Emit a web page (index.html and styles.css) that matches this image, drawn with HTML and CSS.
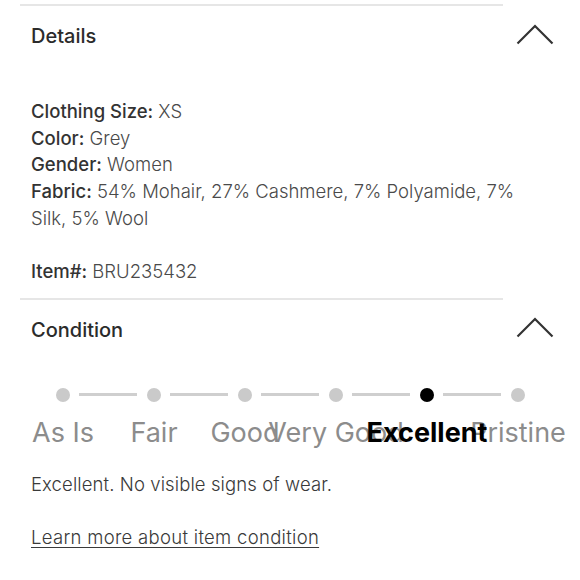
FILE: index.html
```html
<!DOCTYPE html>
<html lang="en">
<head>
  <meta charset="UTF-8">
  <meta name="viewport" content="width=device-width, initial-scale=1.0">
  <title>Listing Details</title>
  <link rel="stylesheet" href="styles.css">
</head>

<body>

  <div class="rule rule-top"></div>

  <!-- Details -->
  <section class="panel">
    <div class="panel-head">
      <h2>Details</h2>
      <svg class="chevron" viewBox="0 0 38 21" width="38" height="21"><polyline points="1.5,19.5 19,2 36.5,19.5" /></svg>
    </div>
    <div class="details">
      <p><b>Clothing Size:</b> XS</p>
      <p><b>Color:</b> Grey</p>
      <p><b>Gender:</b> Women</p>
      <p><b>Fabric:</b> 54% Mohair, 27% Cashmere, 7% Polyamide, 7% Silk, 5% Wool</p>
      <p class="item-no"><b>Item#:</b> BRU235432</p>
    </div>
  </section>

  <div class="rule"></div>

  <!-- Condition -->
  <section class="panel">
    <div class="panel-head">
      <h2>Condition</h2>
      <svg class="chevron" viewBox="0 0 38 21" width="38" height="21"><polyline points="1.5,19.5 19,2 36.5,19.5" /></svg>
    </div>

    <div class="stepper">
      <div class="step"><span class="dot"></span><span class="label">As Is</span></div>
      <div class="step"><span class="dot"></span><span class="label">Fair</span></div>
      <div class="step"><span class="dot"></span><span class="label">Good</span></div>
      <div class="step"><span class="dot"></span><span class="label">Very Good</span></div>
      <div class="step active"><span class="dot"></span><span class="label">Excellent</span></div>
      <div class="step last"><span class="dot"></span><span class="label">Pristine</span></div>
    </div>

    <p class="condition-text">Excellent. No visible signs of wear.</p>
    <p class="condition-link"><a href="#">Learn more about item condition</a></p>
  </section>

</body>
</html>
```

FILE: styles.css
```css
body {
  margin: 0;
  font-family: Inter, "Noto Sans", sans-serif;
  color: #333;
  background: #fff;
}

.rule {
  height: 2px;
  width: 483px;
  margin-left: 20px;
  background-color: #e6e6e6;
}

.rule-top {
  margin-top: 4px;
}

.panel {
  padding: 0 27px 0 20px;
}

.panel-head {
  height: 60px;
  padding-left: 11px;
  display: flex;
  justify-content: space-between;
  align-items: center;
}

.panel-head h2 {
  margin: 0;
  font-size: 20px;
  font-weight: 500;
  color: #2b2b2b;
}

.chevron {
  margin-right: -1px;
  margin-top: -4px;
}

.chevron polyline {
  fill: none;
  stroke: #333;
  stroke-width: 2.2;
}

/* Details list */
.details {
  padding: 32px 0 13px 11px;
  font-size: 18.5px;
  line-height: 26.7px;
  font-weight: 300;
  color: #4a4a4a;
}

.details p {
  margin: 0;
}

.details b {
  font-weight: 500;
  color: #333;
}

.details .item-no {
  margin-top: 26.7px;
}

/* Condition stepper */
.stepper {
  display: grid;
  grid-template-columns: repeat(6, 91px);
  margin: 28px 0 0 -2.5px;
}

.step {
  position: relative;
  display: flex;
  flex-direction: column;
  align-items: center;
}

.step::after {
  content: "";
  position: absolute;
  top: 5.5px;
  left: 61px;
  width: 58px;
  height: 3px;
  background-color: #cfcfcf;
}

.step.last::after {
  display: none;
}

.dot {
  width: 14px;
  height: 14px;
  border-radius: 50%;
  background-color: #cacaca;
}

.label {
  margin-top: 16px;
  white-space: nowrap;
  font-size: 27px;
  line-height: 30px;
  color: #8c8c8c;
}

.step.active {
  z-index: 1;
}

.step.active .dot {
  background-color: #000;
}

.step.active .label {
  color: #000;
  font-weight: 700;
}

.condition-text {
  margin: 23px 0 0 11px;
  font-size: 18.5px;
  line-height: 26px;
  font-weight: 300;
  letter-spacing: 0.1px;
  color: #3a3a3a;
}

.condition-link {
  margin: 27px 0 0 11px;
  font-size: 18.5px;
  line-height: 26px;
  font-weight: 300;
  letter-spacing: 0.3px;
}

.condition-link a {
  color: #3a3a3a;
  text-decoration: underline;
  text-underline-offset: 3px;
}
```
